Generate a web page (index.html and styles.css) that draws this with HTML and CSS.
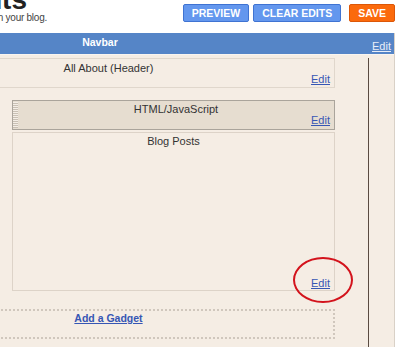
FILE: index.html
```html
<!DOCTYPE html>
<html lang="en">
<head>
  <meta charset="UTF-8" />
  <title>Page Elements</title>
  <link rel="stylesheet" href="styles.css">
</head>
<body>
  <div class="topbar">
    <div class="heading">
      <div class="heading-title">Add and Arrange Page Elements</div>
      <div class="heading-sub">Click and drag to rearrange page elements on your blog.</div>
    </div>
    <div class="actions">
      <button class="btn btn-blue">PREVIEW</button>
      <button class="btn btn-blue btn-clear">CLEAR EDITS</button>
      <button class="btn btn-orange">SAVE</button>
    </div>
  </div>

  <div class="frame">
    <div class="navbar">
      <span class="navbar-title">Navbar</span>
      <a href="#" class="navbar-edit">Edit</a>
    </div>

    <div class="canvas">
      <div class="main">
        <div class="widget header-widget">
          <div class="widget-title">All About (Header)</div>
          <div class="widget-edit"><a href="#">Edit</a></div>
        </div>

        <div class="columns">
          <div class="widget html-widget">
            <div class="grip"></div>
            <div class="widget-body">
              <div class="widget-title">HTML/JavaScript</div>
              <div class="widget-edit"><a href="#">Edit</a></div>
            </div>
          </div>

          <div class="widget blog-widget">
            <div class="widget-title">Blog Posts</div>
            <div class="blog-space"></div>
            <div class="widget-edit"><a href="#">Edit</a></div>
            <!-- annotation circle round the edit link -->
            <div class="circle"></div>
          </div>
        </div>

        <div class="add-gadget"><a href="#">Add a Gadget</a></div>
      </div>
      <div class="sidebar"></div>
    </div>
  </div>
</body>
</html>
```

FILE: styles.css
```css
:root {
  --beige: #f5ede4;
  --link: #3656b4;
  --text: #333333;
}

* {
  box-sizing: border-box;
}

body {
  margin: 0;
  height: 347px;
  overflow: hidden;
  background: #ffffff;
  font-family: 'Liberation Sans', Arial, sans-serif;
  color: var(--text);
}

a {
  color: var(--link);
  text-decoration: underline;
}

/* top bar */
.topbar {
  height: 33px;
  display: flex;
  justify-content: space-between;
  align-items: flex-start;
}

.heading {
  width: 50px;
  height: 33px;
  display: flex;
  flex-direction: column;
  align-items: flex-end;
  overflow: hidden;
  white-space: nowrap;
}

.heading-title {
  font-size: 28px;
  font-weight: bold;
  line-height: 7px;
  margin: -4px 23px 0 0;
  color: #222;
}

.heading-sub {
  font-size: 10px;
  letter-spacing: -0.25px;
  line-height: 29px;
  margin-right: 3px;
  color: #444;
}

.actions {
  display: flex;
  margin-top: 4px;
  padding-right: 5px;
}

.btn {
  height: 18px;
  padding: 0 8px;
  border: 1px solid #3f73d2;
  border-radius: 2px;
  font-family: 'Liberation Sans', Arial, sans-serif;
  font-size: 10.5px;
  font-weight: bold;
  line-height: 16px;
  color: #ffffff;
  cursor: pointer;
}

.btn-blue {
  background: #6397ee;
  margin-right: 4px;
}

.btn-clear {
  margin-right: 8px;
}

.btn-orange {
  background: #fb6a0c;
  border-color: #dc5708;
}

/* layout frame */
.frame {
  width: 395px;
  background: var(--beige);
  border-right: 1px solid #d9d1c7;
}

.navbar {
  height: 22px;
  display: flex;
  background: #5585c7;
  border-bottom: 1px solid #f9f5f0;
}

.navbar-title {
  width: 200px;
  text-align: center;
  font-size: 10.5px;
  font-weight: bold;
  line-height: 19px;
  color: #ffffff;
}

.navbar-edit {
  margin-left: auto;
  align-self: flex-end;
  padding: 0 3px 2px 0;
  font-size: 11px;
  line-height: 11px;
  color: #e9eef8;
}

.canvas {
  display: flex;
  min-height: 300px;
  padding-top: 3px;
}

.main {
  flex: 1;
  margin-left: -118px;
  padding-right: 33px;
}

.sidebar {
  width: 26px;
  border-left: 1px solid #5a4b41;
}

/* widgets */
.widget {
  border: 1px solid #e0d7cc;
  font-size: 11px;
  line-height: 11px;
}

.widget-title {
  text-align: center;
}

.widget-edit {
  text-align: right;
  padding-right: 4px;
}

.header-widget {
  padding: 4px 0 2px;
}

.columns {
  margin: 12px 0 0 130px;
}

.html-widget {
  display: flex;
  background: #e6ddd0;
  border-color: #aaa49b;
}

.grip {
  width: 5px;
  margin: 1px 0;
  background: repeating-linear-gradient(#f4eee6 0 1px, #c9c0b4 1px 2px);
}

.widget-body {
  flex: 1;
  padding: 3px 0;
}

.blog-widget {
  position: relative;
  margin-top: 2px;
  padding: 3px 0 1px;
  border-color: #ddd3c8;
}

.blog-space {
  height: 131px;
}

.circle {
  position: absolute;
  left: 280px;
  top: 124px;
  width: 60px;
  height: 46px;
  border: 2px solid #d3131c;
  border-radius: 50%;
}

.add-gadget {
  margin-top: 18px;
  height: 30px;
  padding-top: 2px;
  border: 2px dotted #d0c7bd;
  text-align: center;
  font-size: 10.5px;
  font-weight: bold;
  line-height: 11px;
}
```
